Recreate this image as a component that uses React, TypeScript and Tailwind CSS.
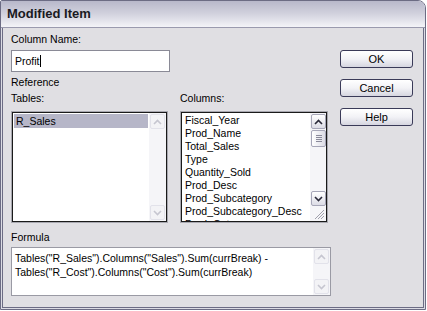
import React from 'react';

const FONT = { fontFamily: '"Liberation Sans", Arial, sans-serif' };

function Chevron({ up, color }: { up?: boolean; color: string }) {
  return (
    <svg width="9" height="6" viewBox="0 0 9 6">
      <path d={up ? 'M1 5 L4.5 1.5 L8 5' : 'M1 1 L4.5 4.5 L8 1'} fill="none" stroke={color} strokeWidth="1.6" />
    </svg>
  );
}

function ArrowBtn({ up, disabled }: { up?: boolean; disabled?: boolean }) {
  return (
    <div
      className={
        'w-[15px] h-[15px] flex items-center justify-center rounded-[2px] border ' +
        (disabled ? 'border-[#e2e2ea] bg-[#f3f3f6]' : 'border-[#a6a6b8] bg-gradient-to-b from-[#ffffff] to-[#dcdce6]')
      }
    >
      <Chevron up={up} color={disabled ? '#c6c6d0' : '#2a2a3a'} />
    </div>
  );
}

function Button({ label }: { label: string }) {
  return (
    <div className="h-[18px] w-[73px] rounded-[3px] border border-[#3a3a58] bg-gradient-to-b from-[#ffffff] via-[#f2f2f6] to-[#d6d6e0] flex items-center justify-center text-[11px] text-black">
      {label}
    </div>
  );
}

const columns = [
  'Fiscal_Year',
  'Prod_Name',
  'Total_Sales',
  'Type',
  'Quantity_Sold',
  'Prod_Desc',
  'Prod_Subcategory',
  'Prod_Subcategory_Desc',
  'Prod_Category',
];

export default function App() {
  return (
    <div className="w-[427px] h-[311px] bg-white" style={FONT}>
      <div className="w-[426px] h-[310px] flex flex-col rounded-tr-[8px] rounded-tl-[2px] border border-[#6c6c84] overflow-hidden">
        <div className="h-[27px] shrink-0 bg-gradient-to-b from-[#b8b8ca] via-[#d2d2de] to-[#f4f4f8] border-b border-[#9a9aae] flex items-center pl-[6px]">
          <span className="text-[13px] font-bold text-[#1a1a22]">Modified Item</span>
        </div>
        <div className="flex-1 flex bg-[#dcdce4] px-px pb-px">
          <div className="flex-1 flex border-x border-b border-[#6c6c84] bg-[#e0dfe3] text-[10.5px] leading-[13px] text-black">
            <div className="w-[320px] ml-[8px] flex flex-col pt-[5px]">
              <div>Column Name:</div>
              <div className="mt-[4px] h-[22px] w-[159px] border border-[#8a8a96] bg-white flex items-center pl-[3px]">
                Profit<span className="inline-block w-px h-[12px] bg-black" />
              </div>
              <div className="mt-[4px]">Reference</div>
              <div className="mt-[3px] flex">
                <div className="w-[169px]">Tables:</div>
                <div>Columns:</div>
              </div>
              <div className="mt-[6px] flex">
                <div className="w-[157px] h-[112px] border border-[#a8a8b0] flex">
                  <div className="flex-1 border border-[#1a1a1a] bg-white flex">
                    <div className="flex-1 p-px">
                      <div className="bg-[#b6b6c8] h-[14px] pl-[2px] leading-[14px]">R_Sales</div>
                    </div>
                    <div className="w-[17px] bg-[#f5f5f8] flex flex-col justify-between p-px">
                      <ArrowBtn up disabled />
                      <ArrowBtn disabled />
                    </div>
                  </div>
                </div>
                <div className="ml-[12px] w-[148px] h-[112px] border border-[#a8a8b0] flex">
                  <div className="flex-1 border border-[#1a1a1a] bg-white flex">
                    <div className="flex-1 pl-[3px] pt-[1px] overflow-hidden">
                      {columns.map((c) => (
                        <div key={c} className="h-[13px] whitespace-nowrap">
                          {c}
                        </div>
                      ))}
                    </div>
                    <div className="w-[16px] bg-[#f5f5f8] flex flex-col p-px">
                      <ArrowBtn up />
                      <div className="mt-px h-[17px] w-[15px] rounded-[2px] border border-[#a6a6b8] bg-gradient-to-r from-[#ffffff] to-[#dcdce6] flex flex-col items-center justify-center gap-[1px]">
                        <div className="w-[6px] h-px bg-[#8a8a9a]" />
                        <div className="w-[6px] h-px bg-[#8a8a9a]" />
                        <div className="w-[6px] h-px bg-[#8a8a9a]" />
                        <div className="w-[6px] h-px bg-[#8a8a9a]" />
                      </div>
                      <div className="flex-1" />
                      <ArrowBtn />
                      <div className="h-[14px] flex items-end justify-end">
                        <svg width="12" height="12" viewBox="0 0 12 12">
                          <path d="M11 2 L2 11 M11 5 L5 11 M11 8 L8 11" stroke="#a0a0ac" strokeWidth="1" />
                        </svg>
                      </div>
                    </div>
                  </div>
                </div>
              </div>
              <div className="mt-[8px]">Formula</div>
              <div className="mt-[3px] h-[49px] w-[320px] border border-[#9a9aa4] bg-white flex">
                <div className="flex-1 pl-[3px] pt-[3px] leading-[14px] whitespace-nowrap">
                  <div>Tables("R_Sales").Columns("Sales").Sum(currBreak) -</div>
                  <div>Tables("R_Cost").Columns("Cost").Sum(currBreak)</div>
                </div>
                <div className="w-[17px] bg-[#f5f5f8] flex flex-col justify-between p-px">
                  <ArrowBtn up disabled />
                  <ArrowBtn disabled />
                </div>
              </div>
            </div>
            <div className="ml-[9px] mt-[22px] flex flex-col gap-[11px]">
              <Button label="OK" />
              <Button label="Cancel" />
              <Button label="Help" />
            </div>
          </div>
        </div>
      </div>
    </div>
  );
}
